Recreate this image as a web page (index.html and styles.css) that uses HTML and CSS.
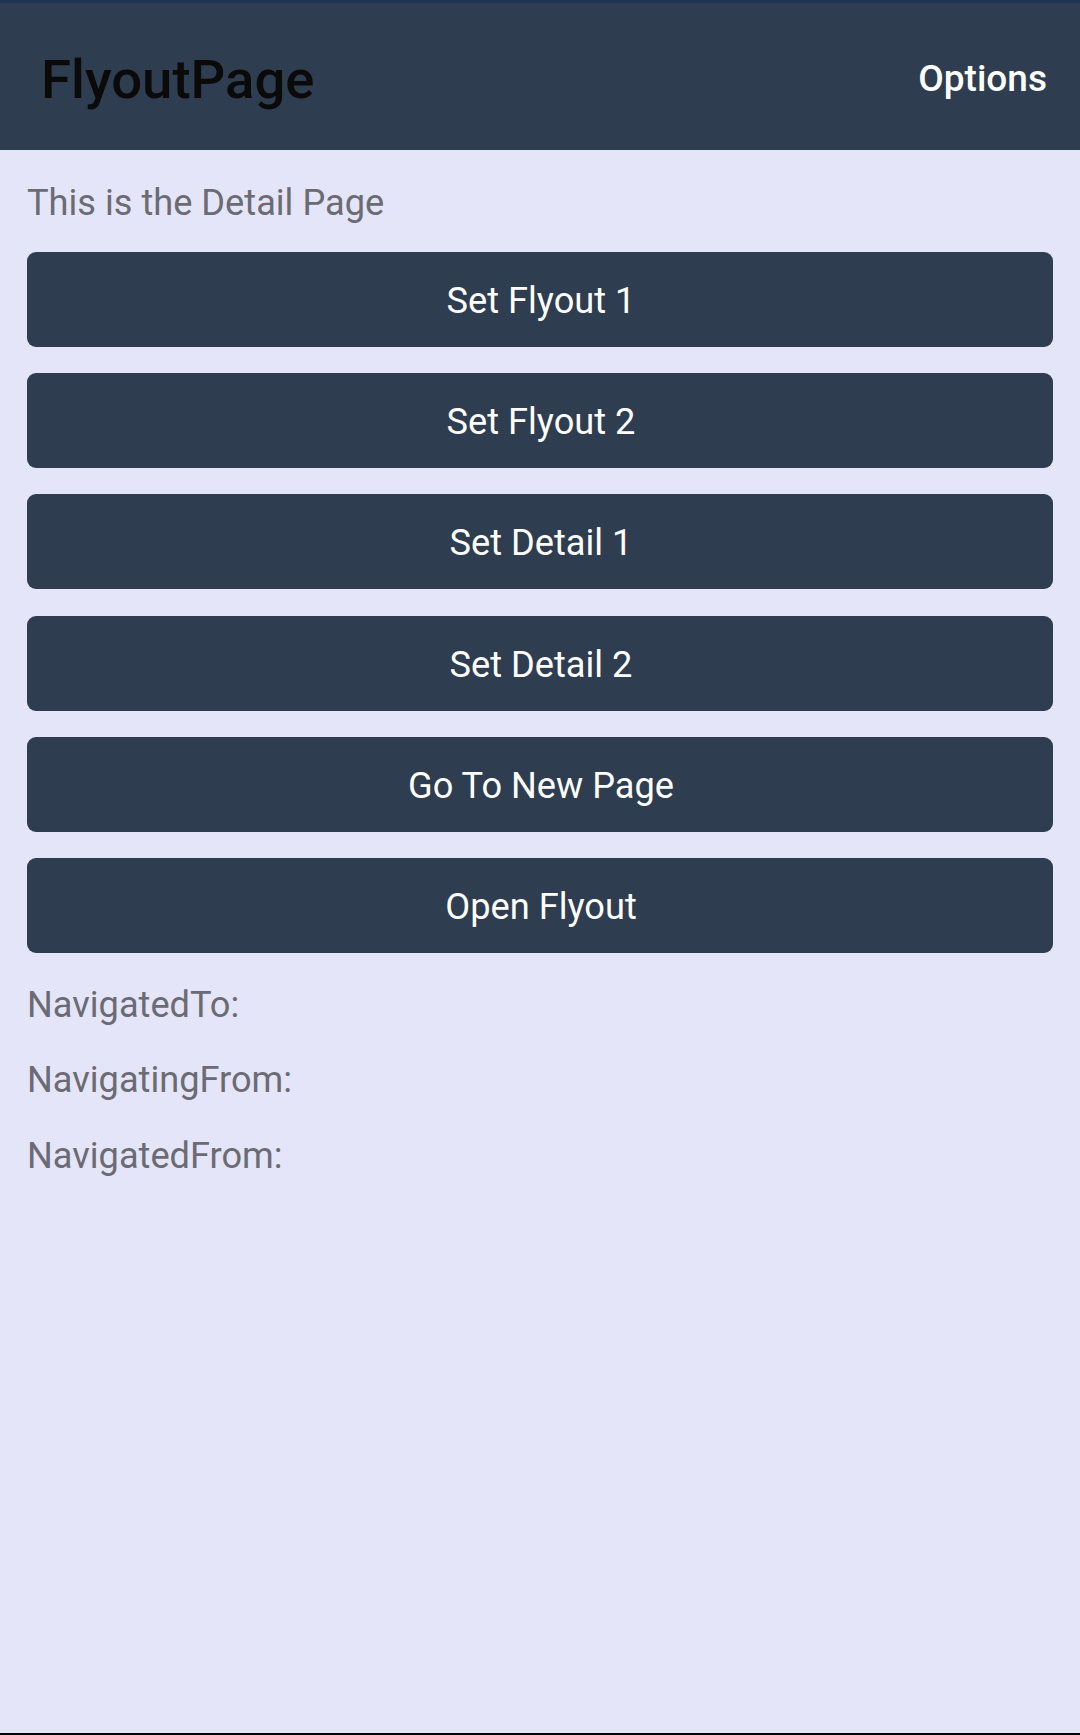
FILE: index.html
```html
<!DOCTYPE html>
<html>
<head>
<meta charset="utf-8">
<link rel="stylesheet" href="styles.css">
</head>
<body>
<div class="screen">
  <header class="toolbar">
    <div class="title">FlyoutPage</div>
    <div class="action">Options</div>
  </header>
  <main class="content">
    <div class="label intro">This is the Detail Page</div>
    <div class="buttons">
      <button class="btn">Set Flyout 1</button>
      <button class="btn">Set Flyout 2</button>
      <button class="btn">Set Detail 1</button>
      <button class="btn">Set Detail 2</button>
      <button class="btn">Go To New Page</button>
      <button class="btn">Open Flyout</button>
    </div>
    <div class="events">
      <div class="label">NavigatedTo:</div>
      <div class="label">NavigatingFrom:</div>
      <div class="label">NavigatedFrom:</div>
    </div>
  </main>
</div>
</body>
</html>
```

FILE: styles.css
```css
* { box-sizing: border-box; }
html, body { margin: 0; padding: 0; }
body {
  font-family: Roboto, "Liberation Sans", sans-serif;
  background: #e5e5f9;
}
.screen {
  width: 1080px;
  height: 1735px;
  display: flex;
  flex-direction: column;
  background: #e5e5f9;
  border-bottom: 2px solid #000;
}
.toolbar {
  height: 150px;
  flex: none;
  background: #2e3d50;
  border-top: 3px solid #1e3450;
  display: flex;
  align-items: center;
  justify-content: space-between;
  padding: 0 33px 0 41px;
}
.title {
  font-size: 54.5px;
  font-weight: 500;
  color: #0a0a0a;
  line-height: 64px;
  margin-top: 4px;
}
.action {
  font-size: 37px;
  font-weight: 500;
  color: #ffffff;
  line-height: 42px;
  margin-top: 4px;
}
.content {
  flex: 1;
  padding: 30px 27px 0 27px;
  display: flex;
  flex-direction: column;
}
.label {
  font-size: 36.2px;
  line-height: 45px;
  color: #6b6b74;
}
.intro { margin-bottom: 27px; }
.buttons {
  display: flex;
  flex-direction: column;
  gap: 26.2px;
}
.btn {
  display: block;
  width: 100%;
  height: 95px;
  border: none;
  border-radius: 9px;
  background: #2e3d50;
  color: #ffffff;
  font-family: Roboto, "Liberation Sans", sans-serif;
  font-size: 36.2px;
  line-height: 45px;
  padding: 2px 0 0 2px;
  text-align: center;
}
.events {
  display: flex;
  flex-direction: column;
  gap: 30.5px;
  margin-top: 29px;
}
```
